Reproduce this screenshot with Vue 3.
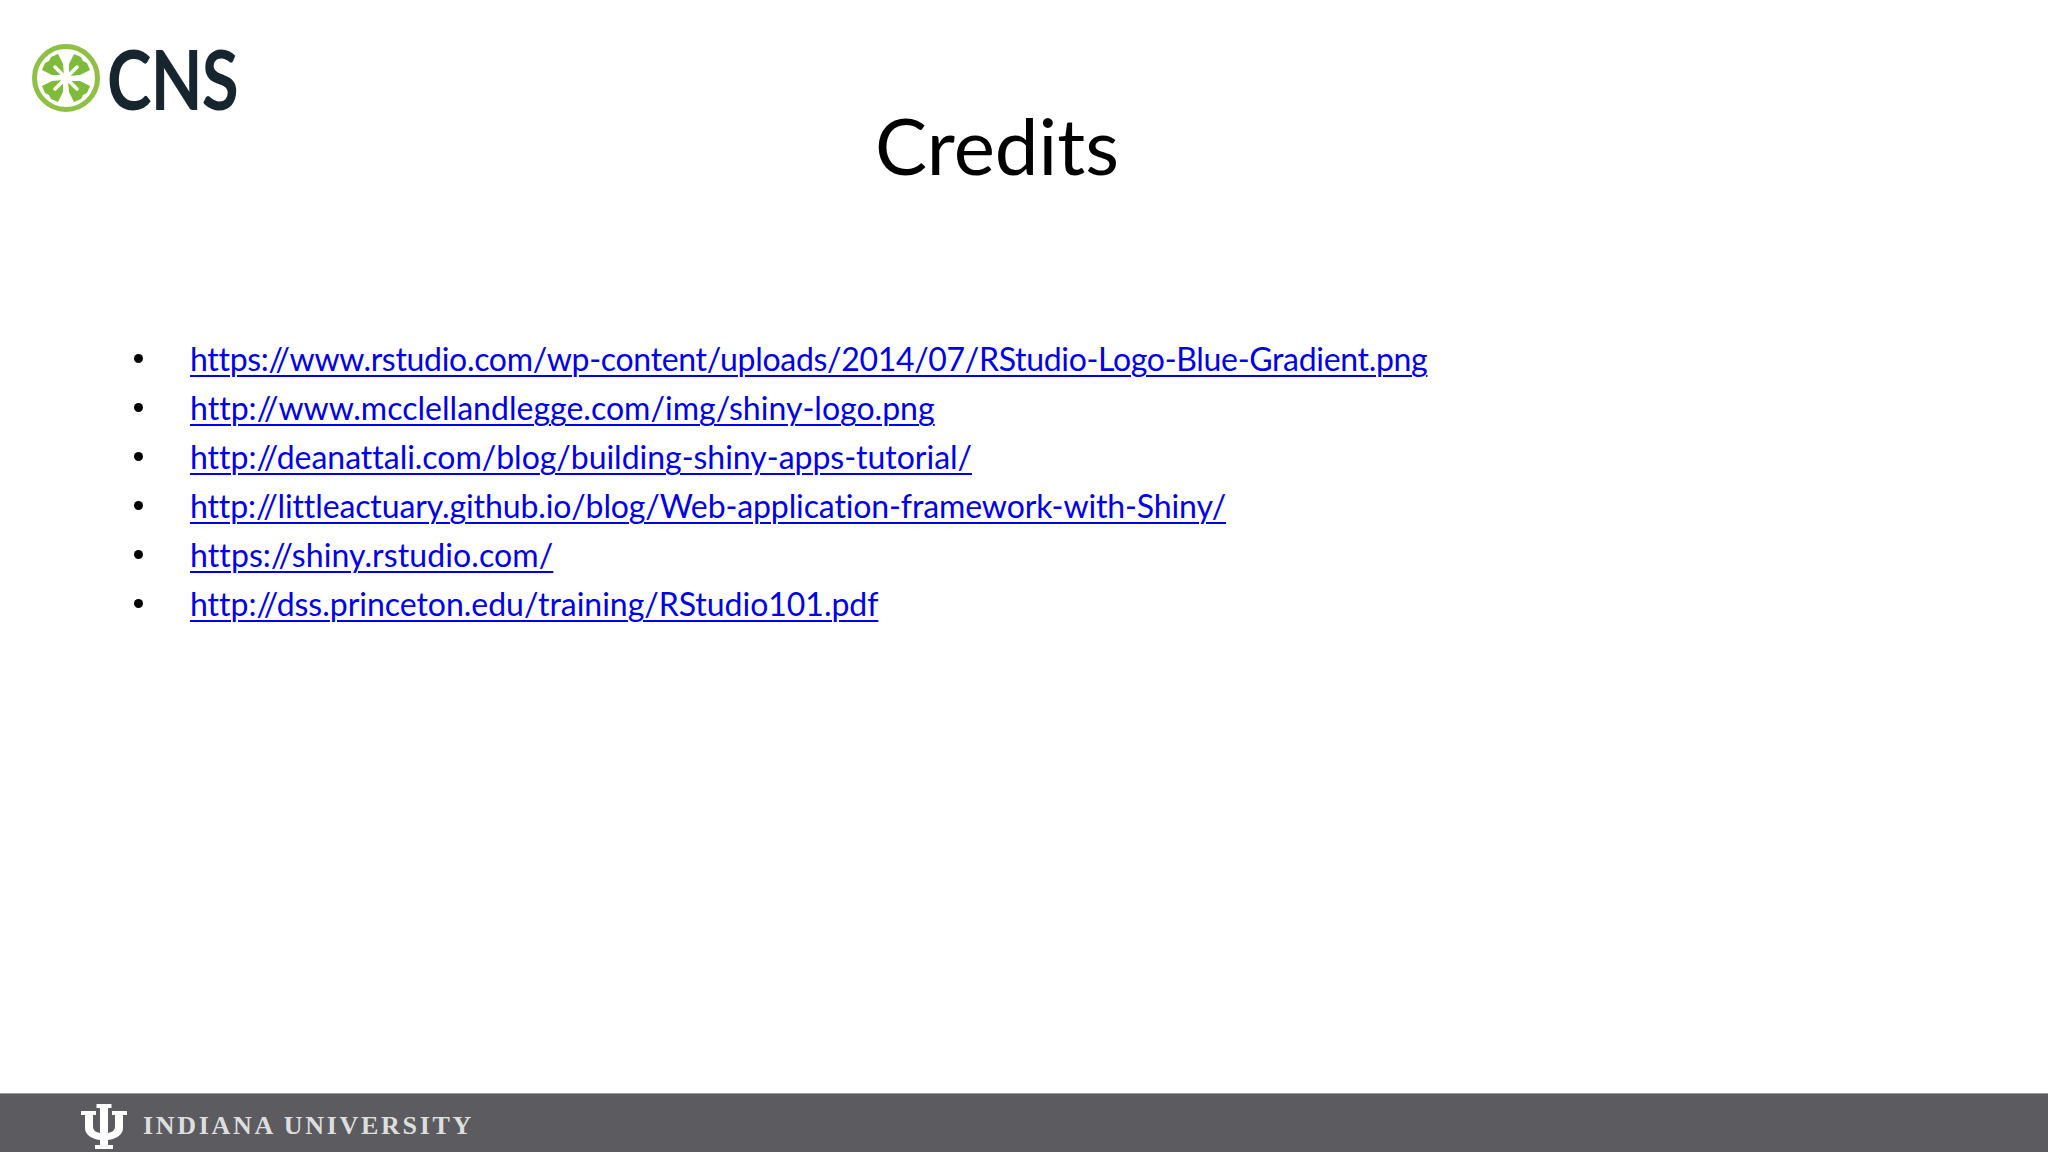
<script setup>
const links = [
  { url: 'https://www.rstudio.com/wp-content/uploads/2014/07/RStudio-Logo-Blue-Gradient.png', track: '-0.315px' },
  { url: 'http://www.mcclellandlegge.com/img/shiny-logo.png', track: '0.025px' },
  { url: 'http://deanattali.com/blog/building-shiny-apps-tutorial/', track: '-0.02px' },
  { url: 'http://littleactuary.github.io/blog/Web-application-framework-with-Shiny/', track: '-0.115px' },
  { url: 'https://shiny.rstudio.com/', track: '0.1px' },
  { url: 'http://dss.princeton.edu/training/RStudio101.pdf', track: '-0.025px' }
]
</script>

<template>
  <div class="slide">
    <header class="head">
      <div class="logo">
        <svg class="clover" width="70" height="70" viewBox="-35 -35 70 70">
          <circle r="31.5" fill="none" stroke="#8dc044" stroke-width="5" />
          <g v-for="r in [0, 90, 180, 270]" :key="r" :transform="`rotate(${r})`">
            <path fill="#7fbb3a" d="M-2-3L-3-14L-8-24L-15-21L-17-17L-21-15L-24-8L-14-3Z" />
            <path d="M-3-3L-11-11" stroke="#fff" stroke-width="3.5" stroke-linecap="round" />
          </g>
        </svg>
        <span class="cns">CNS</span>
      </div>
      <h1 class="title">Credits</h1>
    </header>
    <main class="content">
      <ul class="list">
        <li v-for="l in links" :key="l.url">
          <a :href="l.url" :style="{ letterSpacing: l.track }">{{ l.url }}</a>
        </li>
      </ul>
    </main>
    <footer class="foot">
      <svg class="trident" width="48" height="46" viewBox="0 0 48 46">
        <path fill="#fff" d="M16.5 0H31.5V4H28V29C33 28 35 26 35 22V11H32V7H47V11H43V24C43 31 36 35 28 36V41H33V45H15V41H20V36C12 35 5 31 5 24V11H1V7H16V11H13V22C13 26 15 28 20 29V4H16.5Z" />
      </svg>
      <span class="iu">Indiana University</span>
    </footer>
  </div>
</template>

<style scoped>
.slide {
  width: 2048px;
  height: 1152px;
  display: flex;
  flex-direction: column;
  background: #fff;
  overflow: hidden;
  color: #000;
  font-family: "Lato", "Liberation Sans", sans-serif;
}
.head {
  position: relative;
  height: 334px;
  flex: none;
}
.logo {
  position: absolute;
  left: 31px;
  top: 43px;
  display: flex;
  align-items: center;
  gap: 6px;
  filter: blur(0.5px);
}
.clover {
  display: block;
}
.cns {
  font-family: "Lato", sans-serif;
  font-size: 82px;
  line-height: 66px;
  font-weight: 700;
  letter-spacing: -1px;
  color: #17262e;
  display: inline-block;
  transform: scaleX(0.82);
  transform-origin: left center;
}
.title {
  margin: 0;
  padding-top: 97px;
  padding-right: 54px;
  text-align: center;
  font-weight: 400;
  font-size: 78px;
  line-height: 96px;
}
.content {
  flex: 1;
}
.list {
  list-style: none;
  margin: 0;
  padding: 0 0 0 190px;
  font-size: 32px;
  line-height: 49px;
  font-variant-ligatures: none;
}
.list li {
  position: relative;
}
.list li::before {
  content: "";
  position: absolute;
  left: -56px;
  top: 20px;
  width: 9px;
  height: 9px;
  border-radius: 50%;
  background: #000;
}
.list a {
  color: #0000e6;
  text-decoration: underline;
  text-decoration-thickness: 2px;
  text-underline-offset: 4px;
}
.foot {
  flex: none;
  height: 59px;
  box-sizing: border-box;
  border-top: 1px solid #9a999c;
  background: #5c5b5f;
  display: flex;
  align-items: center;
  padding-left: 80px;
  gap: 15px;
}
.trident {
  display: block;
  margin-top: 8px;
  filter: blur(0.5px);
}
.iu {
  font-family: "Liberation Serif", serif;
  font-weight: 700;
  text-transform: uppercase;
  font-size: 26px;
  letter-spacing: 2.7px;
  color: #dededf;
  padding-top: 6px;
}
</style>
<style>
html, body { margin: 0; background: #fff; }
</style>
